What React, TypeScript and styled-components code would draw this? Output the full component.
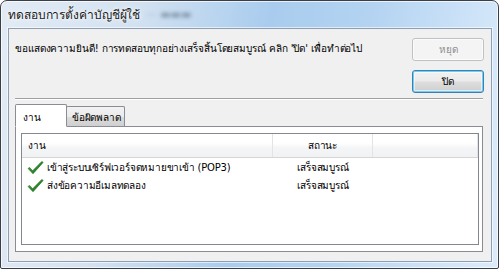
import React from "react";
import styled, { createGlobalStyle } from "styled-components";

const GlobalStyle = createGlobalStyle`
  html, body {
    margin: 0;
    padding: 0;
    width: 499px;
    height: 269px;
    overflow: hidden;
    background: #ffffff;
  }
  body {
    font-family: Tahoma, "DejaVu Sans", "Noto Sans", sans-serif;
    -webkit-font-smoothing: antialiased;
  }
`;

const Window = styled.div`
  box-sizing: border-box;
  width: 499px;
  height: 269px;
  display: flex;
  flex-direction: column;
  border: 1px solid #3a3f47;
  border-radius: 7px 7px 2px 2px;
  background: linear-gradient(
    100deg,
    #e2ebf5 0%,
    #d3e2f1 25%,
    #a9ccee 50%,
    #b3d3f1 68%,
    #d1e5f9 90%,
    #dcebfb 100%
  );
  box-shadow: inset 0 0 0 1px rgba(255, 255, 255, 0.7);
`;

const TitleBar = styled.div`
  height: 27px;
  display: flex;
  align-items: center;
  padding-left: 7px;
  gap: 6px;
`;

const Title = styled.span`
  font-size: 12px;
  letter-spacing: -0.1px;
  color: #1b1b1b;
  text-shadow: 0 0 6px #ffffff, 0 0 3px #ffffff;
`;

const BlurredText = styled.span`
  font-size: 11px;
  color: #4a5a70;
  filter: blur(2px);
  opacity: 0.6;
`;

const Client = styled.div`
  flex: 1;
  margin: 0 6px 6px 7px;
  border: 1px solid #8e9fb4;
  background: #f0f0f0;
  display: flex;
  flex-direction: column;
  box-shadow: 0 0 0 1px rgba(255, 255, 255, 0.6);
`;

const TopRow = styled.div`
  display: grid;
  grid-template-columns: 1fr auto;
  column-gap: 8px;
  padding: 9px 7px 0 6px;
`;

const Message = styled.div`
  font-size: 10px;
  letter-spacing: -0.1px;
  color: #000;
  height: 21px;
  display: flex;
  align-items: center;
  white-space: nowrap;
`;

const ButtonStack = styled.div`
  display: flex;
  flex-direction: column;
  gap: 9px;
`;

const Button = styled.button<{ $default?: boolean }>`
  box-sizing: border-box;
  width: 72px;
  height: 23px;
  padding: 0;
  font-family: inherit;
  font-size: 10px;
  border-radius: 3px;
  color: ${({ disabled }) => (disabled ? "#8d8d8d" : "#000")};
  border: 1px solid
    ${({ disabled, $default }) =>
      disabled ? "#bfc2c5" : $default ? "#3c7fb1" : "#707070"};
  background: ${({ disabled }) =>
    disabled
      ? "#f4f4f4"
      : "linear-gradient(#f2f2f2 0%, #ebebeb 48%, #dddddd 52%, #cfcfcf 100%)"};
  box-shadow: ${({ $default, disabled }) =>
    disabled
      ? "inset 0 0 0 1px #fbfbfb"
      : $default
      ? "inset 0 0 0 1px #6fd0f5, inset 0 0 0 2px rgba(255,255,255,0.5)"
      : "inset 0 0 0 1px #fcfcfc"};
`;

const Separator = styled.div`
  margin: 5px 8px 0 6px;
  height: 1px;
  background: #a0a0a0;
  border-bottom: 1px solid #ffffff;
`;

const TabArea = styled.div`
  flex: 1;
  margin: 4px 8px 9px 6px;
  display: flex;
  flex-direction: column;
`;

const TabStrip = styled.div`
  display: flex;
  align-items: flex-end;
  height: 22px;
`;

const Tab = styled.div<{ $active?: boolean }>`
  box-sizing: border-box;
  position: relative;
  z-index: ${({ $active }) => ($active ? 2 : 1)};
  height: ${({ $active }) => ($active ? "23px" : "20px")};
  margin-bottom: ${({ $active }) => ($active ? "-1px" : "0")};
  margin-left: ${({ $active }) => ($active ? "0" : "-1px")};
  padding: ${({ $active }) => ($active ? "5px 6px 0 7px" : "3px 4px 0 5px")};
  width: ${({ $active }) => ($active ? "52px" : "59px")};
  font-size: 10px;
  letter-spacing: -0.2px;
  color: #000;
  border: 1px solid #898c95;
  border-bottom: ${({ $active }) => ($active ? "1px solid #ffffff" : "none")};
  border-radius: 2px 2px 0 0;
  background: ${({ $active }) =>
    $active ? "#ffffff" : "linear-gradient(#f2f2f2 0%, #ebebeb 50%, #dcdcdc 51%, #cfcfcf 100%)"};
  white-space: nowrap;
`;

const TabPanel = styled.div`
  flex: 1;
  border: 1px solid #898c95;
  background: #ffffff;
  padding: 6px 3px 6px 5px;
  display: flex;
`;

const ListView = styled.div`
  flex: 1;
  border: 1px solid #828790;
  background: #ffffff;
  display: flex;
  flex-direction: column;
`;

const Columns = "251px 100px 1fr";

const HeaderRow = styled.div`
  display: grid;
  grid-template-columns: ${Columns};
  height: 23px;
  background: linear-gradient(#ffffff 0%, #ffffff 40%, #f4f5f7 60%, #f1f2f4 100%);
  border-bottom: 1px solid #d5d5d5;
`;

const HeaderCell = styled.div<{ $center?: boolean }>`
  display: flex;
  align-items: center;
  justify-content: ${({ $center }) => ($center ? "center" : "flex-start")};
  padding-left: ${({ $center }) => ($center ? "0" : "6px")};
  font-size: 10px;
  letter-spacing: -0.2px;
  color: #000;
  border-right: 1px solid #e3e4e6;
`;

const Row = styled.div`
  display: grid;
  grid-template-columns: ${Columns};
  height: 18px;
  align-items: center;
  font-size: 10px;
  letter-spacing: -0.2px;
  color: #000;
`;

const TaskCell = styled.div`
  display: flex;
  align-items: center;
  gap: 3px;
  padding-left: 5px;
  white-space: nowrap;
`;

const StatusCell = styled.div`
  text-align: center;
  white-space: nowrap;
`;

const Check = () => (
  <svg width="17" height="15" viewBox="0 0 17 15">
    <defs>
      <linearGradient id="chk" x1="0" y1="0" x2="1" y2="1">
        <stop offset="0" stopColor="#4fae3e" />
        <stop offset="1" stopColor="#0d6a12" />
      </linearGradient>
    </defs>
    <path
      d="M1 8.5 L2.6 7.4 L5.6 10.8 L14.8 1.4 L16.2 2.4 L6 13.8 Z"
      fill="url(#chk)"
      stroke="#0f5a14"
      strokeWidth="0.5"
      strokeLinejoin="round"
    />
  </svg>
);

const tasks = [
  { name: "เข้าสู่ระบบเซิร์ฟเวอร์จดหมายขาเข้า (POP3)", status: "เสร็จสมบูรณ์" },
  { name: "ส่งข้อความอีเมลทดลอง", status: "เสร็จสมบูรณ์" },
];

const App = (): JSX.Element => {
  return (
    <>
      <GlobalStyle />
      <Window>
        <TitleBar>
          <Title>ทดสอบการตั้งค่าบัญชีผู้ใช้</Title>
          <BlurredText>··· ▬▬▬</BlurredText>
        </TitleBar>
        <Client>
          <TopRow>
            <Message>
              ขอแสดงความยินดี! การทดสอบทุกอย่างเสร็จสิ้นโดยสมบูรณ์ คลิก 'ปิด' เพื่อทำต่อไป
            </Message>
            <ButtonStack>
              <Button disabled>หยุด</Button>
              <Button $default>ปิด</Button>
            </ButtonStack>
          </TopRow>
          <Separator />
          <TabArea>
            <TabStrip>
              <Tab $active>งาน</Tab>
              <Tab>ข้อผิดพลาด</Tab>
            </TabStrip>
            <TabPanel>
              <ListView>
                <HeaderRow>
                  <HeaderCell>งาน</HeaderCell>
                  <HeaderCell $center>สถานะ</HeaderCell>
                  <HeaderCell />
                </HeaderRow>
                {tasks.map((t) => (
                  <Row key={t.name}>
                    <TaskCell>
                      <Check />
                      {t.name}
                    </TaskCell>
                    <StatusCell>{t.status}</StatusCell>
                    <div />
                  </Row>
                ))}
              </ListView>
            </TabPanel>
          </TabArea>
        </Client>
      </Window>
    </>
  );
};

export default App;
